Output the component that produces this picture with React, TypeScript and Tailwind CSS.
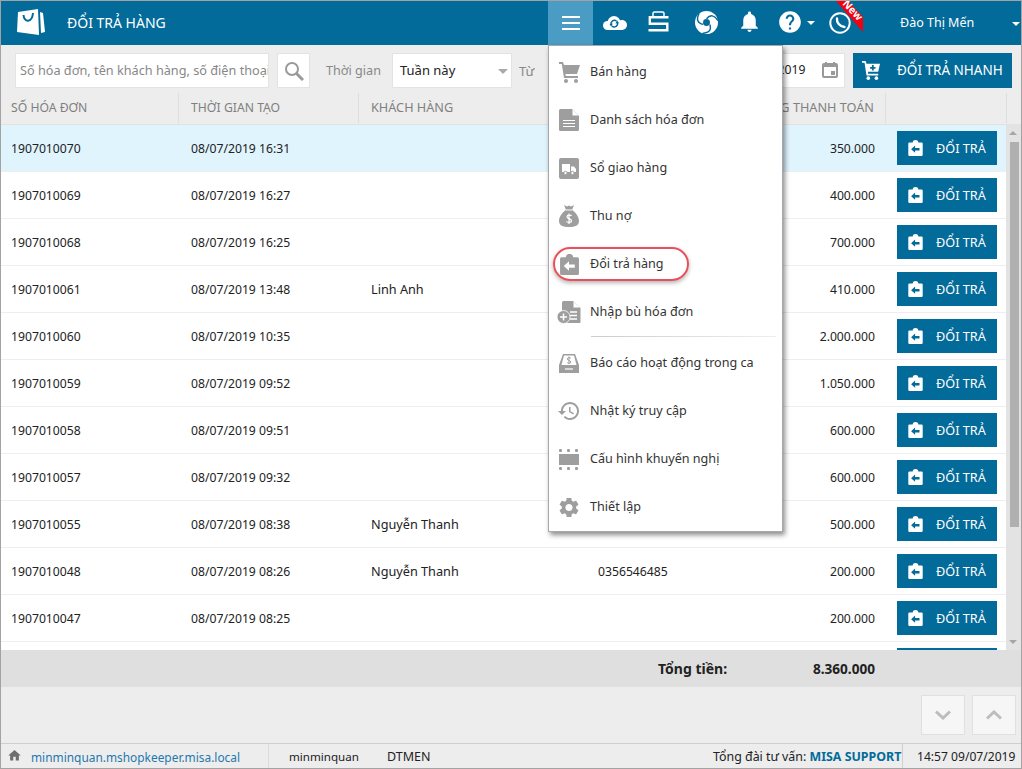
import React from "react";

type P = { className?: string };
const MP = ({ d, className }: P & { d: string }) => (
  <svg viewBox="0 0 24 24" className={className} fill="currentColor"><path d={d} /></svg>
);

const Logo = () => (
  <svg viewBox="0 0 30 28" className="w-[30px] h-[28px]" fill="#fff">
    <path d="M2 4 L22 1 L23 27 L1 24 Z" />
    <path d="M24 4 L27 5 L29 24 L25 25 Z" />
    <path d="M7.500 7 C8 15 16 15 17 5" fill="none" stroke="#026b9a" strokeWidth="2" />
  </svg>
);
const Cloud = () => (
  <svg viewBox="0 0 24 14" className="w-[24px] h-[14px]">
    <g fill="#fff">
      <circle cx="4.500" cy="9.500" r="4.500" /><circle cx="11" cy="6.500" r="6.500" /><circle cx="19" cy="9" r="5" />
      <rect x="4" y="8" width="16" height="6" />
    </g>
    <path fill="none" stroke="#026b9a" strokeWidth="1.500" d="M8 8.500 A3.500 3.500 0 0 1 13.500 5 M14.500 6.500 A3.500 3.500 0 0 1 9 10.200" />
    <path fill="#026b9a" d="M6.500 8 L9.800 7.500 L8.300 10.800 Z M15.800 7 L12.500 7.500 L14 4.200 Z" />
  </svg>
);
const SLogo = () => (
  <svg viewBox="0 0 21 21" className="w-[21px] h-[21px]" fill="none" stroke="white">
    <path strokeWidth="1.500" d="M5 5 V2.200 Q5 1 6.500 1 H14.500 Q16 1 16 2.200 V5" />
    <path strokeWidth="2.400" d="M20.500 6.200 H1.800 V12.800 H19.300 V19.300 H0.500" />
  </svg>
);
const Swirl = () => (
  <svg viewBox="0 0 24 24" className="w-[23px] h-[23px]">
    <circle cx="12" cy="12" r="12" fill="#fff" />
    <circle cx="12" cy="12" r="3.600" fill="#026b9a" />
    <g fill="none" stroke="#026b9a" strokeWidth="1.500">
      <path d="M12 8 C16 3.500 20 4 24 10" />
      <path d="M12 8 C16 3.500 20 4 24 10" transform="rotate(120 12 12)" />
      <path d="M12 8 C16 3.500 20 4 24 10" transform="rotate(240 12 12)" />
    </g>
  </svg>
);
const Board = ({ className, arrow }: P & { arrow: string }) => (
  <svg viewBox="0 0 18 20" className={className}>
    <path fill="currentColor" d="M1.500 3 H5.500 C5.700 1 7 0 9 0 C11 0 12.300 1 12.500 3 H16.500 Q18 3 18 4.500 V18.500 Q18 20 16.500 20 H1.500 Q0 20 0 18.500 V4.500 Q0 3 1.500 3 Z" />
    <path fill={arrow} d="M3.500 11.500 L8.500 7 V10 H14 V13 H8.500 V16 Z" />
  </svg>
);

const CartSolid = () => (
  <svg viewBox="0 0 21 21" className="w-[21px] h-[21px] text-[#9e9e9e]" fill="currentColor">
    <path d="M0 0 H4 L5 3 H21 L18 12 H6.500 L6.800 14 H19 V16 H5 L2.800 2 H0 Z" />
    <circle cx="7" cy="19" r="2" /><circle cx="17" cy="19" r="2" />
  </svg>
);
const Doc = () => (
  <svg viewBox="0 0 20 22" className="w-[20px] h-[22px]">
    <path fill="#9e9e9e" d="M1.500 0 H13 L20 7 V20.500 Q20 22 18.500 22 H1.500 Q0 22 0 20.500 V1.500 Q0 0 1.500 0 Z" />
    <path fill="#fff" d="M13.500 .5 V6.500 H19.500 Z" />
    <path stroke="#fff" strokeWidth="1.200" d="M4 11.500 H16 M4 14.500 H16 M4 17.500 H16" />
  </svg>
);
const Truck = () => (
  <svg viewBox="0 0 20 21" className="w-[20px] h-[21px]">
    <rect width="20" height="21" rx="2" fill="#9e9e9e" />
    <path fill="#fff" d="M3 6 H11 V14 H3 Z M12 8.500 H15 L17 11 V14 H12 Z" />
    <circle cx="6.500" cy="15" r="1.700" fill="#fff" stroke="#9e9e9e" /><circle cx="13.500" cy="15" r="1.700" fill="#fff" stroke="#9e9e9e" />
  </svg>
);
const MoneyBag = () => (
  <svg viewBox="0 0 20 22" className="w-[20px] h-[22px]">
    <path fill="#9e9e9e" d="M5 0 L8 1.500 L10 .5 L12 1.500 L15 0 L13 5 C17 7.500 20 12 20 16 C20 20.500 16 22 10 22 C4 22 0 20.500 0 16 C0 12 3 7.500 7 5 Z" />
    <path stroke="#fff" strokeWidth="1" d="M7 5 H13" />
    <path fill="none" stroke="#fff" strokeWidth="1.200" d="M12.500 11 C12 9.800 8 9.500 8 11.700 C8 14 12.500 13.300 12.500 15.800 C12.500 18 8 17.800 7.500 16.400 M10 8.500 V19" />
  </svg>
);
const Merge = () => (
  <svg viewBox="0 0 24 23" className="w-[24px] h-[23px]">
    <path fill="#9e9e9e" d="M6.500 0 H16 L23.500 7 V21 Q23.500 22 22.500 22 H8 V14 H5 V1.500 Q5 0 6.500 0 Z" />
    <path fill="#fff" d="M16.500 .5 V6.500 H23 Z" />
    <path stroke="#fff" strokeWidth="1.300" d="M13 11 H20 M13 14.500 H20 M13 18 H20" />
    <circle cx="6.500" cy="16" r="6.500" fill="#9e9e9e" stroke="#fff" strokeWidth=".8" />
    <path stroke="#fff" strokeWidth="1.500" d="M3 16 H10 M6.500 12.500 V19.500" />
  </svg>
);
const Tray = () => (
  <svg viewBox="0 0 20 19" className="w-[20px] h-[19px]">
    <path fill="#9e9e9e" d="M4 0 H16 L20 11 V19 H0 V11 Z" />
    <path fill="#fff" d="M5 1.500 H15 L17.500 11 H2.500 Z" />
    <path fill="none" stroke="#9e9e9e" strokeWidth="1" d="M11.800 4.200 C11 3.200 8.400 3.300 8.400 5 C8.400 6.800 11.800 6.200 11.800 8 C11.800 9.700 8.800 9.600 8.200 8.600 M10 2.500 V10" />
    <path stroke="#fff" strokeWidth="1.200" d="M6 15 H14" />
  </svg>
);
const Film = () => (
  <svg viewBox="0 0 20 21" className="w-[20px] h-[21px]" fill="#9e9e9e">
    <rect x="0" y="5" width="20" height="11" />
    <rect x="0" y="0" width="3" height="3" rx="1" /><rect x="8" y="0" width="3" height="3" rx="1" /><rect x="16" y="0" width="3" height="3" rx="1" />
    <rect x="0" y="18" width="3" height="3" rx="1" /><rect x="8" y="18" width="3" height="3" rx="1" /><rect x="16" y="18" width="3" height="3" rx="1" />
  </svg>
);

const HISTORY = "M13 3c-4.970 0-9 4.030-9 9H1l3.890 3.890.070.140L9 12H6c0-3.870 3.130-7 7-7s7 3.130 7 7-3.130 7-7 7c-1.930 0-3.680-.790-4.940-2.060l-1.420 1.420C8.270 19.990 10.510 21 13 21c4.970 0 9-4.030 9-9s-4.030-9-9-9zm-1 5v5l4.280 2.540.720-1.210-3.500-2.080V8H12z";
const GEAR = "M19.140 12.940c.040-.300.060-.610.060-.940 0-.320-.020-.640-.070-.940l2.030-1.580c.180-.140.230-.410.120-.610l-1.920-3.320c-.120-.220-.370-.290-.590-.220l-2.390.960c-.500-.380-1.030-.700-1.620-.940l-.360-2.540c-.040-.240-.240-.410-.480-.410h-3.840c-.240 0-.430.170-.470.410l-.360 2.540c-.590.240-1.130.570-1.620.940l-2.390-.960c-.220-.080-.470 0-.590.220L2.740 8.870c-.120.210-.080.470.120.610l2.030 1.580c-.050.300-.090.630-.090.940s.020.640.070.940l-2.030 1.580c-.180.140-.230.410-.120.610l1.920 3.320c.120.220.370.290.590.220l2.390-.960c.500.380 1.030.700 1.620.940l.360 2.540c.050.240.240.410.480.410h3.840c.240 0 .440-.170.470-.410l.360-2.540c.590-.240 1.130-.560 1.620-.940l2.390.960c.220.080.470 0 .590-.220l1.920-3.320c.120-.220.070-.470-.120-.610l-2.010-1.580zM12 15.600c-1.980 0-3.600-1.620-3.600-3.600s1.620-3.600 3.600-3.600 3.600 1.620 3.600 3.600-1.620 3.600-3.600 3.600z";
const BELL = "M12 22c1.100 0 2-.900 2-2h-4c0 1.100.900 2 2 2zm6-6v-5c0-3.070-1.630-5.640-4.500-6.320V4c0-.830-.670-1.500-1.500-1.500s-1.500.670-1.500 1.500v.680C7.640 5.360 6 7.920 6 11v5l-2 2v1h16v-1l-2-2z";
const HELP = "M12 2C6.480 2 2 6.480 2 12s4.480 10 10 10 10-4.480 10-10S17.520 2 12 2zm1 17h-2v-2h2v2zm2.070-7.750l-.900.920C13.450 12.900 13 13.500 13 15h-2v-.500c0-1.100.450-2.100 1.170-2.830l1.240-1.260c.370-.360.590-.860.590-1.410 0-1.100-.900-2-2-2s-2 .900-2 2H8c0-2.210 1.790-4 4-4s4 1.790 4 4c0 .880-.360 1.680-.930 2.250z";
const HOME = "M10 20v-6h4v6h5v-8h3L12 3 2 12h3v8z";

const rows: [string, string, string, string, string][] = [
  ["1907010070", "08/07/2019 16:31", "", "", "350.000"],
  ["1907010069", "08/07/2019 16:27", "", "", "400.000"],
  ["1907010068", "08/07/2019 16:25", "", "", "700.000"],
  ["1907010061", "08/07/2019 13:48", "Linh Anh", "", "410.000"],
  ["1907010060", "08/07/2019 10:35", "", "", "2.000.000"],
  ["1907010059", "08/07/2019 09:52", "", "", "1.050.000"],
  ["1907010058", "08/07/2019 09:51", "", "", "600.000"],
  ["1907010057", "08/07/2019 09:32", "", "", "600.000"],
  ["1907010055", "08/07/2019 08:38", "Nguyễn Thanh", "", "500.000"],
  ["1907010048", "08/07/2019 08:26", "Nguyễn Thanh", "0356546485", "200.000"],
  ["1907010047", "08/07/2019 08:25", "", "", "200.000"],
  ["", "", "", "", ""],
];

const menu: { label: string; icon: React.ReactNode; top: number }[] = [
  { label: "Bán hàng", icon: <CartSolid />, top: 26 },
  { label: "Danh sách hóa đơn", icon: <Doc />, top: 74 },
  { label: "Sổ giao hàng", icon: <Truck />, top: 122 },
  { label: "Thu nợ", icon: <MoneyBag />, top: 170 },
  { label: "Đổi trả hàng", icon: <Board className="w-[19px] h-[21px] text-[#9e9e9e]" arrow="#fff" />, top: 218 },
  { label: "Nhập bù hóa đơn", icon: <Merge />, top: 266 },
  { label: "Báo cáo hoạt động trong ca", icon: <Tray />, top: 317 },
  { label: "Nhật ký truy cập", icon: <MP d={HISTORY} className="w-[24px] h-[24px] text-[#9e9e9e]" />, top: 365 },
  { label: "Cấu hình khuyến nghị", icon: <Film />, top: 413 },
  { label: "Thiết lập", icon: <MP d={GEAR} className="w-[25px] h-[25px] text-[#9e9e9e]" />, top: 461 },
];

export default function App() {
  return (
    <div className="relative w-[1022px] h-[769px] overflow-hidden bg-[#ededed] border border-[#a3a3a3] text-[13px] text-[#222] font-['Open_Sans',sans-serif] flex flex-col">
      {/* Top bar */}
      <div className="relative h-[44px] shrink-0 bg-[#026b9a] text-white">
        <div className="absolute left-[15px] top-[7px]"><Logo /></div>
        <div className="absolute left-[66px] top-[12px] text-[14px] leading-[20px]">ĐỔI TRẢ HÀNG</div>
        <div className="absolute left-[547px] top-0 w-[45px] h-[44px] bg-[#4a9cc5] flex items-center justify-center">
          <div className="flex flex-col gap-[4px]">
            <div className="w-[18px] h-[2px] bg-white" /><div className="w-[18px] h-[2px] bg-white" /><div className="w-[18px] h-[2px] bg-white" />
          </div>
        </div>
        <div className="absolute left-[602px] top-[15px]"><Cloud /></div>
        <div className="absolute left-[647px] top-[10px]"><SLogo /></div>
        <div className="absolute left-[694px] top-[10px]"><Swirl /></div>
        <div className="absolute left-[736px] top-[8px]"><MP d={BELL} className="w-[25px] h-[25px]" /></div>
        <div className="absolute left-[776px] top-[8px]"><MP d={HELP} className="w-[26px] h-[26px]" /></div>
        <div className="absolute left-[806px] top-[20px] w-0 h-0 border-x-[4px] border-x-transparent border-t-[4px] border-t-white" />
        <svg viewBox="0 0 22 22" className="absolute left-[828px] top-[11px] w-[22px] h-[22px]" fill="none" stroke="#fff">
          <circle cx="11" cy="11" r="9.700" strokeWidth="2" />
          <path d="M8 6.500 C7.500 10.500 10.500 14.500 15.500 15" strokeWidth="2.400" strokeLinecap="round" />
        </svg>
        <div className="absolute left-[835px] top-0 w-[27px] h-[31px] bg-[#f5000f] [clip-path:polygon(0_0,45%_0,100%_52%,100%_100%)]" />
        <div className="absolute left-[838px] top-[3px] w-[28px] text-center text-[10.500px] leading-[12px] font-bold rotate-[47deg]">New</div>
        <div className="absolute left-[899px] top-[12px] leading-[20px] text-[12.500px]">Đào Thị Mến</div>
        <div className="absolute left-[1011px] top-[21px] w-0 h-0 border-x-[4px] border-x-transparent border-t-[4px] border-t-white" />
      </div>

      {/* Filter bar */}
      <div className="relative h-[48px] shrink-0">
        <div className="absolute left-[14px] top-[8px] w-[254px] h-[35px] bg-white border border-[#e3e3e3] pl-[4px] flex items-center text-[#888] text-[12.700px] overflow-hidden whitespace-nowrap">Số hóa đơn, tên khách hàng, số điện thoại</div>
        <div className="absolute left-[276px] top-[8px] w-[33px] h-[35px] bg-white border border-[#e3e3e3] flex items-center justify-center text-[#9a9a9a]">
          <svg viewBox="0 0 20 20" className="w-[20px] h-[20px]" fill="none" stroke="currentColor"><circle cx="8" cy="8" r="6" strokeWidth="2" /><path d="M12.500 12.500 L19 19" strokeWidth="3" /></svg>
        </div>
        <div className="absolute left-[325px] top-[16px] leading-[20px] text-[#888] text-[12.600px]">Thời gian</div>
        <div className="absolute left-[391px] top-[8px] w-[120px] h-[35px] bg-white border border-[#e3e3e3] pl-[7px] flex items-center text-[#222]">Tuần này</div>
        <div className="absolute left-[497px] top-[24px] w-0 h-0 border-x-[5px] border-x-transparent border-t-[5px] border-t-[#aaa]" />
        <div className="absolute left-[518px] top-[16px] leading-[20px] text-[#888]">Từ</div>
        <div className="absolute left-[760px] top-[8px] w-[84px] h-[35px] bg-white border border-[#e3e3e3] pl-[11px] flex items-center text-[12.200px]">/2019</div>
        <div className="absolute left-[821px] top-[17px] text-[#999]">
          <svg viewBox="0 0 16 16" className="w-[16px] h-[16px]"><path fill="currentColor" fillRule="evenodd" d="M2 1 H3 V0 H5 V1 H11 V0 H13 V1 H14 Q16 1 16 3 V14 Q16 16 14 16 H2 Q0 16 0 14 V3 Q0 1 2 1 Z M2 5 V14 H14 V5 Z M9 9 H13 V13 H9 Z" /></svg>
        </div>
        <div className="absolute left-[852px] top-[8px] w-[159px] h-[35px] bg-[#026b9a] text-white text-[13.500px] flex items-center">
          <svg viewBox="0 0 20 21" className="absolute left-[9px] top-[8px] w-[18px] h-[19px]">
            <path fill="#fff" d="M0 0 H4 L5 3 H20 L18 12 H6.500 L6.800 14 H18 V16 H5 L2.800 2 H0 Z" />
            <path fill="#026b9a" d="M11 4.500 H13 V6.500 H15 V8.500 H13 V10.500 H11 V8.500 H9 V6.500 H11 Z" />
            <circle cx="7" cy="19" r="2" fill="#fff" /><circle cx="16" cy="19" r="2" fill="#fff" />
          </svg>
          <span className="absolute left-[44px] whitespace-nowrap">ĐỔI TRẢ NHANH</span>
        </div>
      </div>

      {/* Table header */}
      <div className="relative h-[32px] shrink-0 border-b border-[#e2e2e2] text-[#808080] leading-[28px] text-[12.700px]">
        <div className="absolute left-[10px] top-[1px] text-[12.200px]">SỐ HÓA ĐƠN</div>
        <div className="absolute left-[177px] top-0 h-[30px] w-px bg-[#dedede]" />
        <div className="absolute left-[190px] top-[1px] text-[12.200px]">THỜI GIAN TẠO</div>
        <div className="absolute left-[357px] top-0 h-[30px] w-px bg-[#dedede]" />
        <div className="absolute left-[370px] top-0">KHÁCH HÀNG</div>
        <div className="absolute right-[147px] top-0 whitespace-nowrap">TỔNG THANH TOÁN</div>
        <div className="absolute left-[884px] top-0 h-[30px] w-px bg-[#dedede]" />
        <div className="absolute left-[1005px] top-0 h-[30px] w-px bg-[#dedede]" />
      </div>

      {/* Table body */}
      <div className="relative h-[525px] shrink-0 overflow-hidden bg-white">
        {rows.map((r, i) => (
          <div key={i} className={`flex items-center h-[47px] w-[1005px] border-b border-[#eeeeee] ${i === 0 ? "bg-[#e0f4fe]" : "bg-white"}`}>
            <div className="w-[190px] pl-[10px] relative top-[1px] text-[12.200px]">{r[0]}</div>
            <div className="w-[180px] relative top-[1px] text-[12.200px]">{r[1]}</div>
            <div className="w-[227px] relative top-[1px] text-[12.700px]">{r[2]}</div>
            <div className="w-[160px] relative top-[1px] text-[12.200px]">{r[3]}</div>
            <div className="w-[117px] text-right relative top-[1px] text-[12.200px]">{r[4]}</div>
            <div className="w-[22px]" />
            <div className="relative w-[100px] h-[34px] bg-[#026b9a] text-white">
              <Board className="absolute left-[11px] top-[9px] w-[15px] h-[16px] text-white" arrow="#026b9a" />
              {i < 11 && <span className="absolute left-[39px] top-[7px] leading-[20px] whitespace-nowrap text-[12.700px]">ĐỔI TRẢ</span>}
            </div>
          </div>
        ))}
        <div className="absolute left-[1005px] top-0 w-[15px] h-[525px] bg-[#e3e3e3]">
          <div className="absolute left-[3px] top-[6px] w-0 h-0 border-x-[4px] border-x-transparent border-b-[4px] border-b-[#a6a6a6]" />
          <div className="absolute left-[4px] top-[17px] w-[9px] h-[385px] bg-[#b0b0b0]" />
          <div className="absolute left-[3px] top-[515px] w-0 h-0 border-x-[4px] border-x-transparent border-t-[4px] border-t-[#a6a6a6]" />
        </div>
      </div>

      {/* Total */}
      <div className="relative h-[37px] shrink-0 bg-[#dfdfdf] font-bold text-[14px] leading-[37px]">
        <div className="absolute left-[657px] top-0">Tổng tiền:</div>
        <div className="absolute right-[146px] top-0 text-[13.600px]">8.360.000</div>
      </div>

      {/* Pager */}
      <div className="relative h-[56px] shrink-0">
        <div className="absolute left-[920px] top-[8px] w-[44px] h-[40px] bg-[#f6f6f6] border border-[#e0e0e0] flex items-center justify-center">
          <svg viewBox="0 0 16 10" className="w-[16px] h-[10px]" fill="none" stroke="#bdbdbd" strokeWidth="3"><path d="M1 1.500 L8 8 L15 1.500" /></svg>
        </div>
        <div className="absolute left-[971px] top-[8px] w-[44px] h-[40px] bg-[#f6f6f6] border border-[#e0e0e0] flex items-center justify-center">
          <svg viewBox="0 0 16 10" className="w-[16px] h-[10px]" fill="none" stroke="#bdbdbd" strokeWidth="3"><path d="M1 8.500 L8 2 L15 8.500" /></svg>
        </div>
      </div>

      {/* Status bar */}
      <div className="relative flex-1 border-t border-[#cfcfcf] leading-[26px] text-[12.400px]">
        <MP d={HOME} className="absolute left-[6px] top-[4px] w-[15px] h-[15px] text-[#6e6e6e]" />
        <div className="absolute left-[30px] top-0 text-[#1f78ae] whitespace-nowrap text-[11.900px]">minminquan.mshopkeeper.misa.local</div>
        <div className="absolute left-[267px] top-0 w-px h-full bg-[#dcdcdc]" />
        <div className="absolute left-[288px] top-0 text-[11.600px]">minminquan</div>
        <div className="absolute left-[386px] top-0 text-[12.500px]">DTMEN</div>
        <div className="absolute left-[712px] top-0 whitespace-nowrap">Tổng đài tư vấn: <b className="text-[#026b9a]">MISA SUPPORT</b></div>
        <div className="absolute left-[901px] top-0 w-px h-full bg-[#cfcfcf]" />
        <div className="absolute left-[916px] top-0 whitespace-nowrap text-[12.100px]">14:57 09/07/2019</div>
      </div>

      {/* Dropdown menu */}
      <div className="absolute left-[547px] top-[44px] w-[235px] h-[487px] bg-white border border-[#a8a8a8] shadow-[2px_3px_5px_rgba(0,0,0,0.45)]">
        {menu.map((m) => (
          <div key={m.label} className="absolute left-0 h-[20px] w-full flex items-center" style={{ top: m.top - 10 }}>
            <div className="absolute left-[8px] w-[24px] flex justify-center">{m.icon}</div>
            <div className="absolute left-[41px] leading-[20px] whitespace-nowrap text-[#333] text-[12.600px]">{m.label}</div>
          </div>
        ))}
        <div className="absolute left-[42px] top-[290px] w-[185px] h-px bg-[linear-gradient(90deg,#ccc,#eee)]" />
        <div className="absolute left-[4px] top-[201px] w-[136px] h-[34px] rounded-[17px] border-2 border-[#e8505a] shadow-[0_2px_4px_rgba(0,0,0,0.3)]" />
      </div>
    </div>
  );
}
